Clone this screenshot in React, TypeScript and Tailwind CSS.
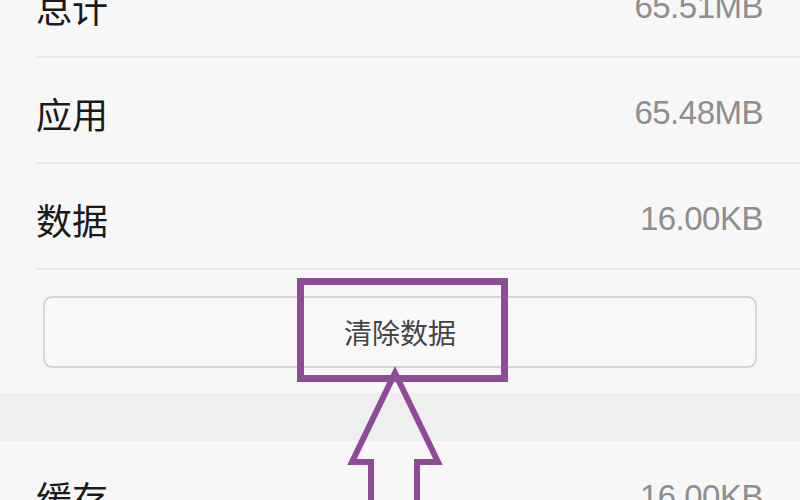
import React from 'react';

type Row = { label: string; value: string };

const topRows: Row[] = [
  { label: '总计', value: '65.51MB' },
  { label: '应用', value: '65.48MB' },
  { label: '数据', value: '16.00KB' },
];

const font = { fontFamily: '"Noto Sans CJK SC", "Liberation Sans", sans-serif' };

const StorageRow: React.FC<{ row: Row; divider?: boolean }> = ({ row, divider = true }) => (
  <div
    className={`ml-[36px] h-[106px] flex items-center justify-between pr-[37px] pt-[5px] ${
      divider ? 'border-b-2 border-[#e9e9e9]' : ''
    }`}
  >
    <span className="text-[36px] leading-none text-[#1a1a1a]">{row.label}</span>
    <span className="text-[33px] leading-none text-[#8e8e8e] font-['Liberation_Sans',sans-serif] tracking-[-0.5px]">
      {row.value}
    </span>
  </div>
);

export default function App() {
  return (
    <div className="relative w-[800px] h-[500px] overflow-hidden bg-[#f7f7f7]" style={font}>
      <div className="flex flex-col -mt-[48px]">
        {topRows.map(row => (
          <StorageRow key={row.label} row={row} />
        ))}

        <div className="pt-[26px] pb-[25px] px-[43px]">
          <button className="w-full h-[72px] rounded-[9px] border-2 border-[#d6d6d6] bg-[#f9f9f9] flex items-center justify-center">
            <span className="text-[28px] leading-none text-[#444444]">清除数据</span>
          </button>
        </div>

        <div className="h-[48px] bg-[#eef0ef]" />

        <StorageRow row={{ label: '缓存', value: '16.00KB' }} divider={false} />
      </div>

      {/* annotation box */}
      <div className="absolute left-[297px] top-[278px] w-[211px] h-[104px] border-[7px] border-[#8e4c98]" />

      {/* annotation arrow */}
      <svg className="absolute inset-0 pointer-events-none" width="800" height="500" viewBox="0 0 800 500">
        <polygon
          points="395,373 438,462 417,462 417,510 371,510 371,462 352,462"
          fill="none"
          stroke="#8e4c98"
          strokeWidth="6"
          strokeLinejoin="miter"
        />
      </svg>
    </div>
  );
}
